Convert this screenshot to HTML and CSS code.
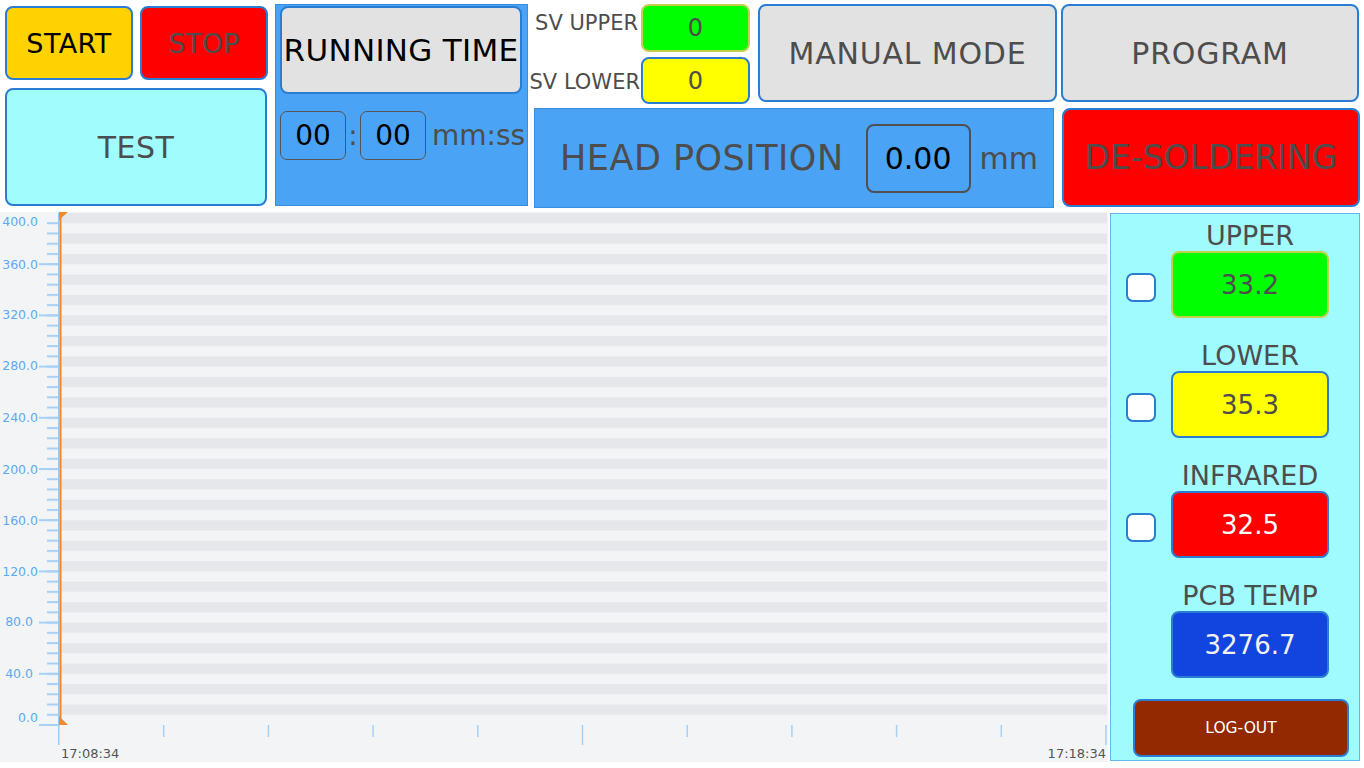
FILE: index.html
```html
<!DOCTYPE html>
<html>

<head>
    <meta charset='UTF-8'>
    <title>Rework Station</title>
    <link rel="stylesheet" href="styles.css">
</head>

<body>
    <div class='top'>
        <!-- Start / stop / test -->
        <div class='run-controls'>
            <div class='run-row'>
                <button class='btn btn-start'>START</button>
                <button class='btn btn-stop'>STOP</button>
            </div>
            <button class='btn btn-test'>TEST</button>
        </div>

        <!-- Running time -->
        <div class='timer-panel'>
            <button class='btn btn-running'>RUNNING TIME</button>
            <div class='timer-row'>
                <div class='time-box'>00</div>
                <span class='colon'>:</span>
                <div class='time-box'>00</div>
                <span class='time-unit'>mm:ss</span>
            </div>
        </div>

        <div class='right-top'>
            <div class='top-row'>
                <div class='sv-block'>
                    <span class='sv-label sv-label-upper'>SV UPPER</span>
                    <div class='sv-box sv-upper'>0</div>
                    <span class='sv-label sv-label-lower'>SV LOWER</span>
                    <div class='sv-box sv-lower'>0</div>
                </div>
                <button class='btn btn-mode'>MANUAL MODE</button>
                <button class='btn btn-program'>PROGRAM</button>
            </div>
            <div class='bottom-row'>
                <div class='head-panel'>
                    <span class='head-label'>HEAD POSITION</span>
                    <div class='head-box'>0.00</div>
                    <span class='head-unit'>mm</span>
                </div>
                <button class='btn btn-desolder'>DE-SOLDERING</button>
            </div>
        </div>
    </div>

    <div class='main'>
        <!-- Temperature chart -->
        <svg class='chart' width='1108' height='550' viewBox='0 0 1108 550'>
            <defs>
                <pattern id='stripes' width='1046' height='20.48' y='1' patternUnits='userSpaceOnUse'>
                    <rect width='1046' height='10.24' fill='#e5e7ea' />
                </pattern>
                <pattern id='minor-ticks' width='20' height='10.24' patternUnits='userSpaceOnUse'>
                    <rect width='20' height='2' fill='#a6d0f6' />
                </pattern>
                <pattern id='major-ticks' width='20' height='51.2' patternUnits='userSpaceOnUse'>
                    <rect width='20' height='2' fill='#a6d0f6' />
                </pattern>
            </defs>
            <rect width='1108' height='550' fill='#f3f4f6' />
            <rect x='61' y='1' width='1046' height='512' fill='url(#stripes)' />
            <rect x='47' y='10' width='12' height='504' fill='url(#minor-ticks)' />
            <rect x='39' y='50' width='20' height='464' fill='url(#major-ticks)' />

            <g class='x-ticks'>
                <line x1='163.7' y1='513' x2='163.7' y2='525' />
                <line x1='268.4' y1='513' x2='268.4' y2='525' />
                <line x1='373.1' y1='513' x2='373.1' y2='525' />
                <line x1='477.8' y1='513' x2='477.8' y2='525' />
                <line x1='582.5' y1='513' x2='582.5' y2='533' />
                <line x1='687.2' y1='513' x2='687.2' y2='525' />
                <line x1='791.9' y1='513' x2='791.9' y2='525' />
                <line x1='896.6' y1='513' x2='896.6' y2='525' />
                <line x1='1001.3' y1='513' x2='1001.3' y2='525' />
                <line x1='1106' y1='513' x2='1106' y2='533' />
            </g>

            <rect x='58' y='1' width='1.5' height='532' fill='#9ccaf4' />
            <rect x='59.5' y='1' width='2' height='512' fill='#f5882a' />
            <polygon points='59,0 68,0 59,8' fill='#f5882a' />
            <polygon points='59,504 59,513 68,513' fill='#f5882a' />

            <g class='y-labels'>
                <text x='38' y='13.5'>400.0</text>
                <text x='38' y='56.5'>360.0</text>
                <text x='38' y='106.5'>320.0</text>
                <text x='38' y='157.5'>280.0</text>
                <text x='38' y='209.5'>240.0</text>
                <text x='38' y='261.5'>200.0</text>
                <text x='38' y='312.5'>160.0</text>
                <text x='38' y='363.5'>120.0</text>
                <text x='33' y='413.5'>80.0</text>
                <text x='33' y='465.5'>40.0</text>
                <text x='38' y='510'>0.0</text>
            </g>

            <text class='x-label' x='61' y='545.5'>17:08:34</text>
            <text class='x-label x-label-end' x='1106' y='545.5'>17:18:34</text>
        </svg>

        <!-- Sensor readings -->
        <div class='sensor-panel'>
            <div class='sensor'>
                <span class='sensor-label'>UPPER</span>
                <input type='checkbox' class='sensor-check'>
                <div class='sensor-value value-upper'>33.2</div>
            </div>
            <div class='sensor'>
                <span class='sensor-label'>LOWER</span>
                <input type='checkbox' class='sensor-check'>
                <div class='sensor-value value-lower'>35.3</div>
            </div>
            <div class='sensor'>
                <span class='sensor-label'>INFRARED</span>
                <input type='checkbox' class='sensor-check'>
                <div class='sensor-value value-infrared'>32.5</div>
            </div>
            <div class='sensor'>
                <span class='sensor-label'>PCB TEMP</span>
                <div class='sensor-value value-pcb'>3276.7</div>
            </div>
            <button class='btn btn-logout'>LOG-OUT</button>
        </div>
    </div>
</body>

</html>
```

FILE: styles.css
```css
:root {
    --btn-border: #2a7dd2;
    --panel-blue: #4aa3f4;
    --text-grey: #4d4d4d;
    --btn-grey: #e2e2e2;
}

body {
    font-family: "DejaVu Sans", Verdana, sans-serif;
    margin: 0;
    background: #ffffff;
    width: 1364px;
    height: 768px;
    overflow: hidden;
}

.btn {
    font-family: inherit;
    box-sizing: border-box;
    border: 2px solid var(--btn-border);
    border-radius: 8px;
    padding: 0;
    margin: 0;
    white-space: nowrap;
    color: var(--text-grey);
    cursor: pointer;
}

/* Top controls */
.top {
    display: flex;
    height: 212px;
}

.run-controls {
    display: flex;
    flex-direction: column;
    gap: 8px;
    width: 263px;
    margin: 6px 0 0 5px;
}

.run-row {
    display: flex;
    gap: 7px;
}

.btn-start,
.btn-stop {
    width: 128px;
    height: 74px;
    font-size: 27px;
}

.btn-start {
    background: #ffd200;
    color: #000000;
    letter-spacing: 0.4px;
}

.btn-stop {
    background: #ff0000;
}

.btn-test {
    width: 262px;
    height: 118px;
    font-size: 30px;
    letter-spacing: 0.5px;
    background: #a0fcfd;
}

.timer-panel {
    box-sizing: border-box;
    width: 253px;
    height: 202px;
    margin: 4px 0 0 7px;
    padding: 1px 0 0 4px;
    background: var(--panel-blue);
    border: 1px solid #3b8edb;
}

.btn-running {
    width: 242px;
    height: 88px;
    font-size: 31px;
    letter-spacing: 0.3px;
    background: var(--btn-grey);
    color: #000000;
}

.timer-row {
    display: flex;
    align-items: center;
    margin-top: 17px;
}

.time-box {
    flex-shrink: 0;
    box-sizing: border-box;
    width: 66px;
    height: 49px;
    border: 1px solid #555555;
    border-radius: 7px;
    font-size: 28px;
    display: flex;
    align-items: center;
    justify-content: center;
}

.colon {
    flex-shrink: 0;
    width: 14px;
    text-align: center;
    font-size: 28px;
    color: var(--text-grey);
}

.time-unit {
    flex-shrink: 0;
    margin-left: 6px;
    font-size: 28px;
    color: var(--text-grey);
}

.right-top {
    display: flex;
    flex-direction: column;
    width: 829px;
    margin-left: 3px;
}

.top-row {
    display: flex;
    align-items: flex-start;
    height: 100px;
    margin-top: 4px;
}

.sv-block {
    display: grid;
    grid-template-columns: 110px 109px;
    grid-template-rows: 48px 47px;
    row-gap: 5px;
    width: 219px;
    margin-right: 8px;
}

.sv-label {
    justify-self: end;
    align-self: start;
    font-size: 21px;
    line-height: 1;
    color: var(--text-grey);
    white-space: nowrap;
    padding-right: 1px;
}

.sv-label-upper {
    margin-top: 9px;
    padding-right: 3px;
}

.sv-label-lower {
    margin-top: 15px;
}

.sv-box {
    box-sizing: border-box;
    border: 2px solid var(--btn-border);
    border-radius: 8px;
    font-size: 24px;
    color: var(--text-grey);
    display: flex;
    align-items: center;
    justify-content: center;
}

.sv-upper {
    background: #00ff00;
    border-color: #c4cf4a;
}

.sv-lower {
    background: #ffff00;
}

.btn-mode,
.btn-program {
    height: 98px;
    font-size: 30px;
    letter-spacing: 0.8px;
    background: var(--btn-grey);
}

.btn-mode {
    width: 299px;
}

.btn-program {
    width: 298px;
    margin-left: 4px;
}

.bottom-row {
    display: flex;
    align-items: flex-start;
    margin-top: 4px;
}

.head-panel {
    box-sizing: border-box;
    display: flex;
    align-items: center;
    width: 520px;
    height: 100px;
    margin-left: 3px;
    padding-left: 25px;
    background: var(--panel-blue);
    border: 1px solid #3b8edb;
}

.head-label {
    font-size: 35px;
    letter-spacing: 0.5px;
    color: var(--text-grey);
    white-space: nowrap;
}

.head-box {
    flex-shrink: 0;
    box-sizing: border-box;
    width: 105px;
    height: 69px;
    margin-left: 22px;
    border: 2px solid #505050;
    border-radius: 8px;
    font-size: 30px;
    display: flex;
    align-items: center;
    justify-content: center;
}

.head-unit {
    margin-left: 9px;
    font-size: 30px;
    color: var(--text-grey);
}

.btn-desolder {
    width: 298px;
    height: 99px;
    margin-left: 8px;
    font-size: 33px;
    background: #ff0000;
}

/* Chart + sensors */
.main {
    display: flex;
    align-items: flex-start;
}

.chart {
    display: block;
    flex-shrink: 0;
}

.x-ticks line {
    stroke: #a6d0f6;
    stroke-width: 1.5;
}

.y-labels text {
    font-family: "DejaVu Sans", sans-serif;
    font-size: 12.5px;
    fill: #5ea9f1;
    text-anchor: end;
}

.x-label {
    font-family: "DejaVu Sans", sans-serif;
    font-size: 13px;
    fill: #555555;
}

.x-label-end {
    text-anchor: end;
}

.sensor-panel {
    box-sizing: border-box;
    display: flex;
    flex-direction: column;
    gap: 16px;
    width: 250px;
    height: 548px;
    margin: 1px 0 0 2px;
    background: #a0fbfe;
    border: 1px solid #63b5ea;
}

.sensor {
    display: grid;
    grid-template-columns: 45px 158px;
    grid-template-rows: 37px 67px;
    padding-left: 15px;
}

.sensor-label {
    grid-column: 2;
    grid-row: 1;
    display: flex;
    align-items: flex-end;
    justify-content: center;
    padding-bottom: 2px;
    font-size: 27px;
    line-height: 1;
    color: var(--text-grey);
    white-space: nowrap;
}

.sensor-check {
    grid-column: 1;
    grid-row: 2;
    align-self: start;
    appearance: none;
    box-sizing: border-box;
    width: 30px;
    height: 29px;
    margin: 22px 0 0 0;
    background: #ffffff;
    border: 2px solid var(--btn-border);
    border-radius: 7px;
}

.sensor-value {
    grid-column: 2;
    grid-row: 2;
    box-sizing: border-box;
    border: 2px solid var(--btn-border);
    border-radius: 8px;
    font-size: 26px;
    color: var(--text-grey);
    display: flex;
    align-items: center;
    justify-content: center;
}

.value-upper {
    background: #00ff00;
    border-color: #c4cf4a;
}

.value-lower {
    background: #ffff00;
}

.value-infrared {
    background: #ff0000;
    color: #ffffff;
}

.value-pcb {
    background: #1245e0;
    color: #f2f2f2;
}

.btn-logout {
    width: 216px;
    height: 58px;
    margin: 5px 0 0 22px;
    font-size: 15.5px;
    background: #922900;
    color: #ffffff;
}
```
